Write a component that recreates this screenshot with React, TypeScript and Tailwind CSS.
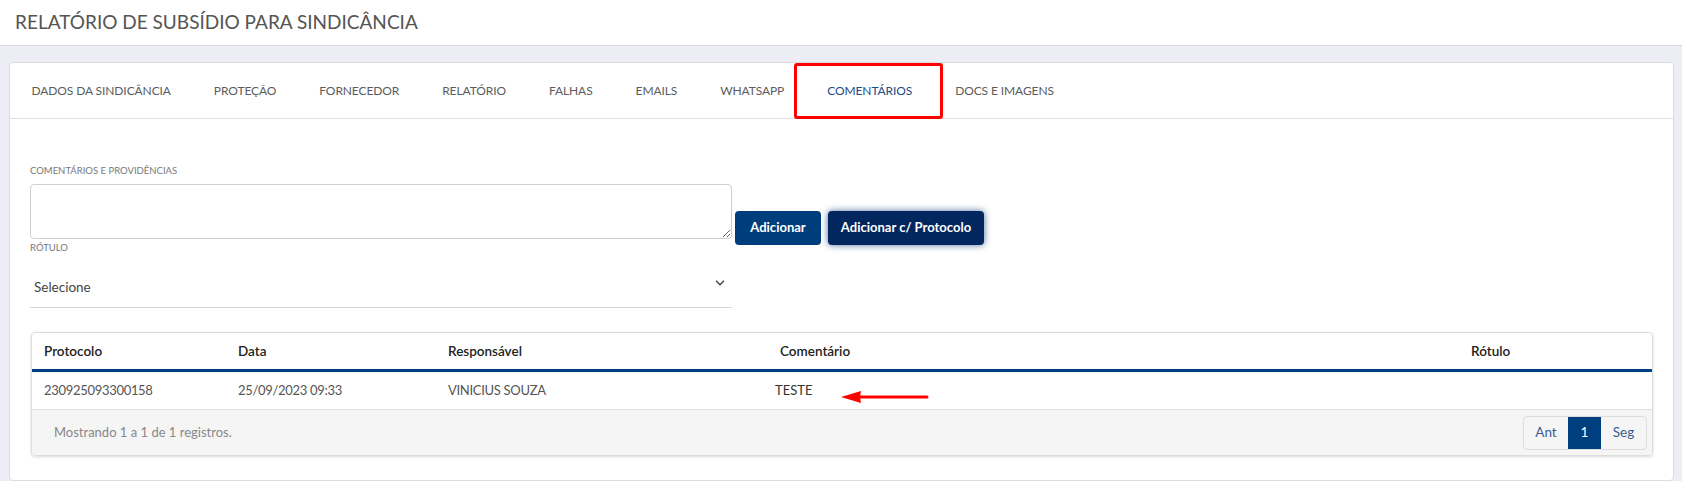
import { ChevronDown } from 'lucide-react'

const TABS = [
  'DADOS DA SINDICÂNCIA', 'PROTEÇÃO', 'FORNECEDOR', 'RELATÓRIO', 'FALHAS',
  'EMAILS', 'WHATSAPP', 'COMENTÁRIOS', 'DOCS E IMAGENS',
]
const ACTIVE = 'COMENTÁRIOS'

const ROWS = [
  { protocolo: '230925093300158', data: '25/09/2023 09:33', responsavel: 'VINICIUS SOUZA', comentario: 'TESTE', rotulo: '' },
]

// column boundaries of the comments table
const COLS = 'grid grid-cols-[194px_210px_332px_691px_1fr]'

export default function App() {
  return (
    <div className="min-h-screen bg-[#ededf5] font-['Lato',sans-serif] text-[#555]">
      {/* ── PAGE TITLE ───────────────────────────────────────────── */}
      <header className="h-[46px] bg-white border-b border-[#d9d9e1] flex items-center pl-[15px]">
        <h1 className="text-[19px] text-[#555]">RELATÓRIO DE SUBSÍDIO PARA SINDICÂNCIA</h1>
      </header>

      <div className="pt-[16px] pl-[9px] pr-[8px]">
        <div className="bg-white border border-[#dcdcdc] rounded-[4px] pb-[24px]">
          {/* ── TABS ─────────────────────────────────────────────── */}
          <ul className="flex h-[56px] border-b border-[#dedede]">
            {TABS.map(t => (
              <li key={t} className={`relative flex items-center px-[21.5px] text-[12px] tracking-[-0.1px] ${t === ACTIVE ? 'text-[#1c4b85]' : 'text-[#5c5c5c]'}`}>
                {t}
                {t === ACTIVE && (
                  <span className="absolute -left-[12px] -right-[9px] top-0 -bottom-[1px] border-[3px] border-[#ff0000] rounded-[3px]" />
                )}
              </li>
            ))}
          </ul>

          <div className="pt-[46px] px-[20px]">
            {/* ── NEW COMMENT FORM ──────────────────────────────── */}
            <label className="block text-[9.5px] leading-[12px] text-[#777] mb-[7px]">COMENTÁRIOS E PROVIDÊNCIAS</label>
            <div className="flex items-start h-[55px]">
              <textarea className="w-[702px] h-[55px] border border-[#cfcfcf] rounded-[4px] outline-none" />
              <button className="ml-[3px] mt-[27px] w-[86px] h-[34px] rounded-[4px] bg-[#003d7c] text-white text-[13px] font-bold">
                Adicionar
              </button>
              <button className="ml-[7px] mt-[27px] w-[156px] h-[34px] rounded-[4px] bg-[#02265e] text-white text-[13px] font-bold shadow-[0_0_7px_rgba(0,45,120,0.7)]">
                Adicionar c/ Protocolo
              </button>
            </div>

            <label className="block mt-[3px] text-[9.5px] leading-[12px] text-[#777]">RÓTULO</label>
            <div className="relative w-[702px] h-[54px] border-b border-[#d6d6d6] pt-[23px] pl-[4px] text-[13.5px] leading-[20px] text-[#444]">
              Selecione
              <ChevronDown className="absolute right-[5px] top-[22px] text-[#555]" size={14} strokeWidth={3} />
            </div>

            {/* ── COMMENTS TABLE ────────────────────────────────── */}
            <div className="ml-[1px] mt-[24px] border border-[#dddddd] rounded-[4px] overflow-hidden shadow-[0_1px_3px_rgba(0,0,0,0.15)]">
              <div className={`${COLS} h-[36px] items-center text-[13.5px] font-semibold text-[#222]`}>
                <div className="pl-[12px]">Protocolo</div>
                <div className="pl-[12px]">Data</div>
                <div className="pl-[12px]">Responsável</div>
                <div className="pl-[12px]">Comentário</div>
                <div className="pl-[12px]">Rótulo</div>
              </div>
              <div className="h-[3px] bg-[#003f7f]" />
              {ROWS.map(r => (
                <div key={r.protocolo} className={`${COLS} h-[38px] items-stretch border-b border-[#dedede] text-[13px] tracking-[-0.3px] text-[#555]`}>
                  <div className="pl-[12px] flex items-center">{r.protocolo}</div>
                  <div className="pl-[12px] flex items-center">{r.data}</div>
                  <div className="pl-[12px] flex items-center">{r.responsavel}</div>
                  <div className="relative pl-[7px] flex items-center text-[#333] tracking-normal">
                    {r.comentario}
                    <svg className="absolute left-[73px] top-[18px]" width="88" height="14" viewBox="0 0 88 14">
                      <line x1="17" y1="7" x2="86" y2="7" stroke="#ff0000" strokeWidth="3" strokeLinecap="round" />
                      <polygon points="0,7 20,1 19,7 20,13" fill="#ff0000" />
                    </svg>
                  </div>
                  <div className="pl-[12px] flex items-center">{r.rotulo}</div>
                </div>
              ))}
              <div className="h-[45px] bg-[#f5f5f5] flex items-center justify-between pl-[22px] pr-[5px]">
                <span className="text-[13px] text-[#888]">Mostrando 1 a 1 de 1 registros.</span>
                <div className="flex h-[34px] border border-[#dcdcdc] rounded-[4px] overflow-hidden text-[13.5px]">
                  <span className="w-[44px] flex items-center justify-center text-[#3a5d8f]">Ant</span>
                  <span className="w-[33px] flex items-center justify-center bg-[#003f7f] text-white">1</span>
                  <span className="w-[45px] flex items-center justify-center text-[#3a5d8f]">Seg</span>
                </div>
              </div>
            </div>
          </div>
        </div>
      </div>
    </div>
  )
}
